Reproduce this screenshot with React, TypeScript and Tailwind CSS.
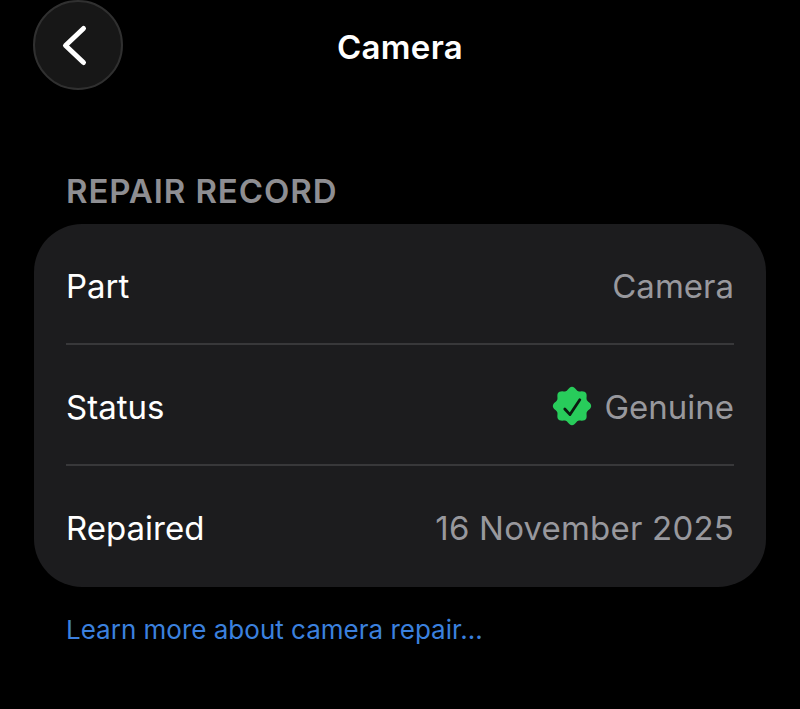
function BackChevron() {
  return (
    <svg width="90" height="90" viewBox="0 0 90 90" className="shrink-0">
      <path d="M50.5 28.5 L32.5 45.5 L50.5 62.5" fill="none" stroke="#fff" strokeWidth="5" strokeLinecap="round" strokeLinejoin="round" />
    </svg>
  );
}

function BadgeIcon() {
  // scalloped badge, 8 soft lobes, one pointing straight up
  const points: string[] = [];
  for (let i = 0; i < 96; i++) {
    const a = (i / 96) * Math.PI * 2;
    const r = 17.6 + 1.6 * Math.cos(8 * a);
    points.push(`${(20 + r * Math.sin(a)).toFixed(2)},${(20 - r * Math.cos(a)).toFixed(2)}`);
  }
  return (
    <svg width="40" height="40" viewBox="0 0 40 40" className="mt-[-2px] shrink-0">
      <polygon points={points.join(" ")} fill="#28cc5b" />
      <path d="M12.8 23 L18 28.6 L27.8 13.8" fill="none" stroke="#0c1a10" strokeWidth="2.8" strokeLinecap="round" strokeLinejoin="round" />
    </svg>
  );
}

function Row({ label, children, divider }: { label: string; children: React.ReactNode; divider?: boolean }) {
  return (
    <div className={`flex h-[121px] items-center justify-between border-b-2 pt-[5px] ${divider ? "border-[#38383a]" : "border-transparent"}`}>
      <span className="text-[33px] leading-none text-white">{label}</span>
      {children}
    </div>
  );
}

export default function App() {
  return (
    <div className="h-[709px] w-[800px] overflow-hidden bg-black font-['Inter',sans-serif]">
      <header className="relative flex h-[90px] items-center justify-center pt-[5px]">
        <button className="absolute left-[33px] top-0 flex h-[90px] w-[90px] items-center justify-center rounded-full border-2 border-[#303030] bg-[#171717]">
          <BackChevron />
        </button>
        <h1 className="text-[33px] leading-none font-semibold tracking-[0.3px] text-white">Camera</h1>
      </header>
      <section className="px-[34px] pt-[85px]">
        <h2 className="pl-[32px] text-[33px] leading-[32px] font-semibold tracking-[0.9px] text-[#8e8e92]">REPAIR RECORD</h2>
        <div className="mt-[17px] rounded-[48px] bg-[#1c1c1e] px-[32px]">
          <Row label="Part" divider>
            <span className="text-[33px] leading-none text-[#98989d]">Camera</span>
          </Row>
          <Row label="Status" divider>
            <span className="flex items-center gap-[12px] text-[33px] leading-none text-[#98989d]">
              <BadgeIcon />
              Genuine
            </span>
          </Row>
          <Row label="Repaired">
            <span className="text-[33px] leading-none tracking-[0.2px] text-[#98989d]">16 November 2025</span>
          </Row>
        </div>
        <p className="mt-[28px] pl-[32px] text-[26px] leading-[30px] text-[#3b80de]">Learn more about camera repair...</p>
      </section>
    </div>
  );
}
